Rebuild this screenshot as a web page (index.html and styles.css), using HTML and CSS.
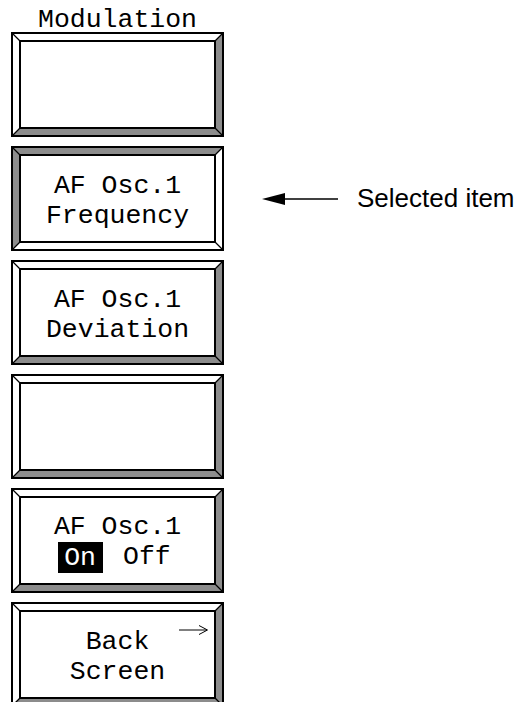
FILE: index.html
```html
<!DOCTYPE html>
<html lang="en">
<head>
  <meta charset="UTF-8">
  <title>Modulation</title>
  <link rel="stylesheet" href="styles.css">
</head>
<body>
  <main class="panel">
    <div class="title">Modulation</div>

    <div class="key"></div>

    <div class="row">
      <div class="key sel">
        <div class="label">AF Osc.1<br>Frequency</div>
      </div>
      <div class="note">
        <svg class="note-arrow" width="76" height="14" viewBox="0 0 76 14">
          <polygon points="0,7 23,1 23,13" fill="#000"/>
          <line x1="22" y1="7" x2="76" y2="7" stroke="#000" stroke-width="1.7"/>
        </svg>
        <span>Selected item</span>
      </div>
    </div>

    <div class="key">
      <div class="label">AF Osc.1<br>Deviation</div>
    </div>

    <div class="key"></div>

    <div class="key">
      <div class="label">
        AF Osc.1
        <div class="toggle"><span class="on">On</span><span>Off</span></div>
      </div>
    </div>

    <div class="key">
      <div class="label">Back<br>Screen</div>
      <svg class="next" width="30" height="12" viewBox="0 0 30 12">
        <line x1="0" y1="6" x2="28" y2="6" stroke="#000" stroke-width="1"/>
        <polyline points="20,1.5 28.5,6 20,10.5" fill="none" stroke="#000" stroke-width="1"/>
      </svg>
    </div>
  </main>
</body>
</html>
```

FILE: styles.css
```css
html {
  overflow: hidden;
}

body {
  margin: 0;
  padding: 8px 0 0 11px;
  background: #fff;
  color: #000;
  font-family: "Liberation Mono", "Courier New", monospace;
  font-size: 26.5px;
}

.panel {
  display: flex;
  flex-direction: column;
}

.title {
  width: 213px;
  text-align: center;
  line-height: 24px;
}

/* soft key with bevelled frame */
.key {
  position: relative;
  width: 213px;
  height: 105px;
  flex: none;
  display: flex;
  align-items: center;
  justify-content: center;
  margin-bottom: 9px;
  background: url("data:image/svg+xml,<svg xmlns='http://www.w3.org/2000/svg' width='213' height='105'><path d='M1 1H212L204 9H9V96L1 104Z' fill='white'/><path d='M212 1V104H1L9 96H204V9Z' fill='%238c8c8c'/><rect x='1' y='1' width='211' height='103' fill='none' stroke='black' stroke-width='2'/><rect x='9' y='9' width='195' height='87' fill='white' stroke='black' stroke-width='2'/><path d='M1.5 1.5L9 9M211.5 1.5L204 9M1.5 103.5L9 96M211.5 103.5L204 96' stroke='black' stroke-width='1.3'/></svg>") no-repeat;
}

/* selected key: bevel pressed in */
.key.sel {
  background: url("data:image/svg+xml,<svg xmlns='http://www.w3.org/2000/svg' width='213' height='105'><path d='M1 1H212L204 9H9V96L1 104Z' fill='%238c8c8c'/><path d='M212 1V104H1L9 96H204V9Z' fill='white'/><rect x='1' y='1' width='211' height='103' fill='none' stroke='black' stroke-width='2'/><rect x='9' y='9' width='195' height='87' fill='white' stroke='black' stroke-width='2'/><path d='M1.5 1.5L9 9M211.5 1.5L204 9M1.5 103.5L9 96M211.5 103.5L204 96' stroke='black' stroke-width='1.3'/></svg>") no-repeat;
}

.label {
  text-align: center;
  line-height: 30px;
  padding-top: 4px;
}

.toggle {
  display: flex;
  justify-content: center;
  gap: 20px;
  margin-left: -6px;
}

.on {
  background: #000;
  color: #fff;
  padding: 1px 7px 0 6px;
}

.next {
  position: absolute;
  top: 22px;
  left: 168px;
}

.row {
  display: flex;
  align-items: center;
}

.note {
  display: flex;
  align-items: center;
  margin-left: 38px;
  margin-bottom: 9px;
  font-family: "Liberation Sans", Arial, sans-serif;
  font-size: 26px;
}

.note-arrow {
  margin-right: 19px;
}
```
